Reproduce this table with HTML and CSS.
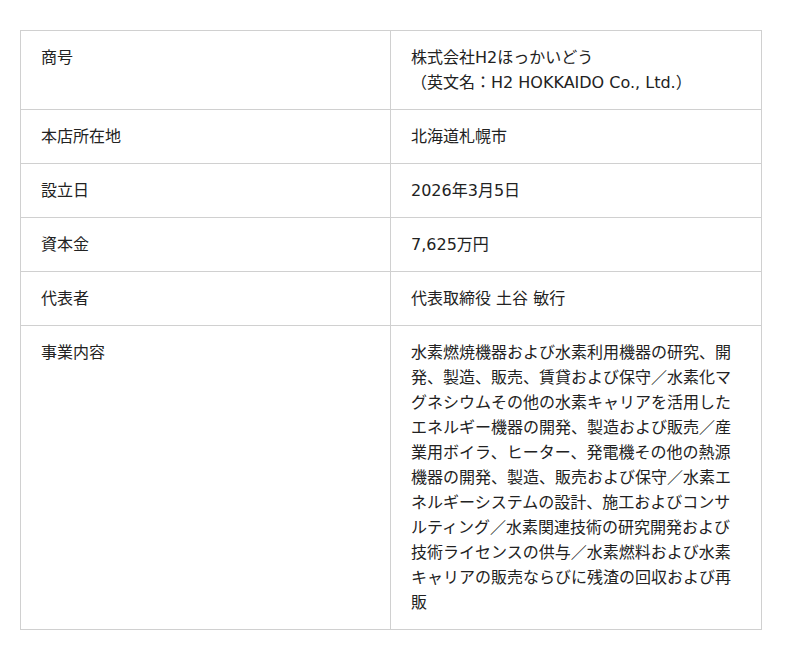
FILE: index.html
```html
<!DOCTYPE html>
<html lang="ja">
<head>
<meta charset="utf-8">
<link rel="stylesheet" href="styles.css">
</head>
<body>
<table class="info">
<tr><th>商号</th><td>株式会社H2ほっかいどう<br>（英文名：H2 HOKKAIDO Co., Ltd.）</td></tr>
<tr><th>本店所在地</th><td>北海道札幌市</td></tr>
<tr><th>設立日</th><td>2026年3月5日</td></tr>
<tr><th>資本金</th><td>7,625万円</td></tr>
<tr><th>代表者</th><td>代表取締役 土谷 敏行</td></tr>
<tr><th>事業内容</th><td>水素燃焼機器および水素利用機器の研究、開発、製造、販売、賃貸および保守／水素化マグネシウムその他の水素キャリアを活用したエネルギー機器の開発、製造および販売／産業用ボイラ、ヒーター、発電機その他の熱源機器の開発、製造、販売および保守／水素エネルギーシステムの設計、施工およびコンサルティング／水素関連技術の研究開発および技術ライセンスの供与／水素燃料および水素キャリアの販売ならびに残渣の回収および再販</td></tr>
</table>
</body>
</html>
```
FILE: styles.css
```css
html, body { background: #fff; }
body {
  margin: 0;
  padding: 30px 0 0 20px;
  font-family: "DejaVu Sans", "Noto Sans CJK JP", sans-serif;
  font-size: 16px;
  color: #222;
}
.info {
  border-collapse: collapse;
  width: 742px;
  table-layout: fixed;
}
.info th, .info td {
  border: 1px solid #d0d0d0;
  padding: 14px 20px;
  line-height: 25px;
  text-align: left;
  vertical-align: top;
  font-weight: normal;
}
.info th { width: 329px; }
.info td { line-break: strict; }
```
